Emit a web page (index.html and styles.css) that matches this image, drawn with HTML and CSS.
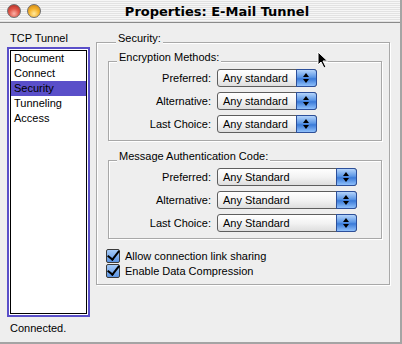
FILE: index.html
```html
<!DOCTYPE html>
<html lang="en">
<head>
  <meta charset="UTF-8" />
  <title>Properties: E-Mail Tunnel</title>
  <link rel="stylesheet" href="styles.css">
</head>
<body>
  <div class="window">
    <div class="titlebar">
      <div class="lights">
        <span class="light close"></span>
        <span class="light minimize"></span>
      </div>
      <h1>Properties: E-Mail Tunnel</h1>
    </div>

    <div class="content">
      <div class="sidebar">
        <p class="caption">TCP Tunnel</p>
        <ul class="list">
          <li>Document</li>
          <li>Connect</li>
          <li class="selected">Security</li>
          <li>Tunneling</li>
          <li>Access</li>
        </ul>
        <p class="status">Connected.</p>
      </div>

      <div class="group main-group">
        <div class="group-title">Security:</div>

        <div class="group sub-group">
          <div class="group-title">Encryption Methods:</div>
          <div class="rows">
            <label>Preferred:</label>
            <div class="popup">Any standard<span class="arrows"></span></div>
            <label>Alternative:</label>
            <div class="popup">Any standard<span class="arrows"></span></div>
            <label>Last Choice:</label>
            <div class="popup">Any standard<span class="arrows"></span></div>
          </div>
        </div>

        <div class="group sub-group mac">
          <div class="group-title">Message Authentication Code:</div>
          <div class="rows">
            <label>Preferred:</label>
            <div class="popup wide">Any Standard<span class="arrows"></span></div>
            <label>Alternative:</label>
            <div class="popup wide">Any Standard<span class="arrows"></span></div>
            <label>Last Choice:</label>
            <div class="popup wide">Any Standard<span class="arrows"></span></div>
          </div>
        </div>

        <div class="checks">
          <div class="check"><span class="box"></span>Allow connection link sharing</div>
          <div class="check"><span class="box"></span>Enable Data Compression</div>
        </div>
      </div>
    </div>

    <svg class="cursor" width="12" height="18" viewBox="0 0 12 18">
      <path d="M1 1 L1 14 L4 11 L7 17 L9 16 L6 10 L10.5 10 Z" fill="#000" stroke="#fff" stroke-width="1" />
    </svg>
  </div>
</body>
</html>
```

FILE: styles.css
```css
body {
  margin: 0;
  background: #ffffff;
  font-family: 'Liberation Sans', Arial, sans-serif;
  font-size: 11px;
  color: #000;
}

.window {
  position: relative;
  width: 400px;
  height: 342px;
  background: #eeeeee;
  border-right: 2px solid #a4a4a4;
  border-bottom: 2px solid #a4a4a4;
  overflow: hidden;
}

.titlebar {
  height: 22px;
  border-bottom: 1px solid #8a8a8a;
  background: repeating-linear-gradient(to bottom, #f6f6f6 0, #f6f6f6 1px, #e2e2e2 1px, #e2e2e2 2px);
  display: flex;
  align-items: center;
}

.lights {
  display: flex;
  gap: 6px;
  padding-left: 7px;
}

.light {
  width: 14px;
  height: 14px;
  border-radius: 50%;
  border: 1px solid #707070;
  box-sizing: border-box;
}

.close {
  background: radial-gradient(circle at 50% 72%, #fbb2a8 0, #e2574a 45%, #a8261d 100%);
}

.minimize {
  background: radial-gradient(circle at 50% 72%, #ffe9a0 0, #f7b52e 45%, #c67d0e 100%);
}

.titlebar h1 {
  flex: 1;
  margin: 0 0 0 -7px;
  text-align: center;
  font-family: 'DejaVu Sans', sans-serif;
  font-size: 13px;
  font-weight: bold;
}

.content {
  display: flex;
  padding: 9px 0 0 7px;
}

.sidebar {
  width: 83px;
}

.caption {
  margin: 0 0 0 3px;
  height: 15px;
  line-height: 12px;
}

.list {
  list-style: none;
  margin: 0;
  height: 270px;
  border: 2px solid #5a4fc9;
  box-shadow: inset 0 0 0 1px #fff, inset 0 0 0 2px #000;
  background: #fff;
  box-sizing: border-box;
  padding: 2px;
}

.list li {
  height: 15px;
  line-height: 15px;
  padding-left: 3px;
}

.list li.selected {
  background: #5a4fc9;
}

.status {
  margin: 5px 0 0 3px;
  line-height: 12px;
}

/* group boxes: title sits on the top border */
.group {
  border: 1px solid #a8a8a8;
  box-shadow: 1px 1px 0 #fff, inset 1px 1px 0 #fff;
}

.group-title {
  display: table;
  margin: -11px 0 0 8px;
  padding: 0 2px;
  line-height: 12px;
  background: #eeeeee;
}

.main-group {
  margin: 10px 0 0 6px;
  width: 294px;
  height: 243px;
  box-sizing: border-box;
  padding: 0 0 0 11px;
}

.sub-group {
  width: 274px;
  box-sizing: border-box;
  margin-top: 17px;
  padding-bottom: 7px;
}

.sub-group.mac {
  margin-top: 19px;
  padding-bottom: 6px;
}

.rows {
  display: grid;
  grid-template-columns: 102px auto;
  column-gap: 6px;
  row-gap: 5px;
  align-items: center;
  padding-top: 6px;
}

.rows label {
  text-align: right;
}

.popup {
  position: relative;
  width: 100px;
  height: 18px;
  box-sizing: border-box;
  border: 1px solid #5e5e5e;
  border-radius: 3px;
  background: linear-gradient(to bottom, #ffffff 0, #f3f3f3 50%, #dedede 100%);
  line-height: 16px;
  padding-left: 5px;
}

.popup.wide {
  width: 140px;
}

.arrows {
  position: absolute;
  top: -1px;
  right: -1px;
  bottom: -1px;
  width: 21px;
  border-radius: 0 3px 3px 0;
  border: 1px solid #2c4f9a;
  box-sizing: border-box;
  background: linear-gradient(to bottom, #b4d4fb 0, #5c97e6 45%, #3a7ad8 55%, #8fc0fb 100%);
}

.arrows::before,
.arrows::after {
  content: "";
  position: absolute;
  left: 6px;
  border-left: 3.5px solid transparent;
  border-right: 3.5px solid transparent;
}

.arrows::before {
  top: 3px;
  border-bottom: 4px solid #000;
}

.arrows::after {
  bottom: 3px;
  border-top: 4px solid #000;
}

.checks {
  margin: 9px 0 0 -2px;
}

.check {
  display: flex;
  align-items: center;
  gap: 5px;
  height: 15px;
}

.box {
  width: 14px;
  height: 14px;
  box-sizing: border-box;
  border: 1px solid #3a3a3a;
  border-radius: 2px;
  background: linear-gradient(to bottom, #a6cbf7, #5b94e3);
  position: relative;
}

.box::after {
  content: "";
  position: absolute;
  left: 3px;
  top: -2px;
  width: 5px;
  height: 10px;
  border-right: 2.5px solid #000;
  border-bottom: 2.5px solid #000;
  transform: rotate(38deg);
}

.cursor {
  position: absolute;
  left: 317px;
  top: 51px;
}
```
